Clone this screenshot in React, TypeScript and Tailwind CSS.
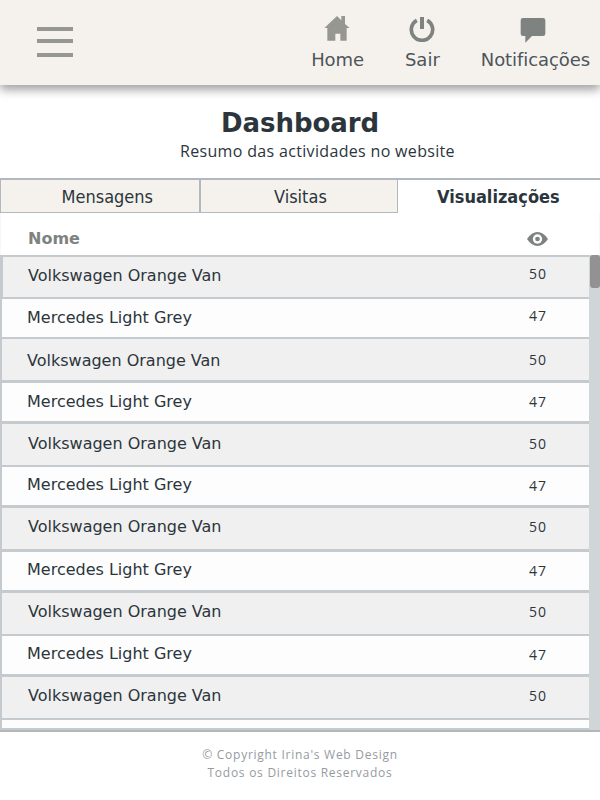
type Row = {
  name: string;
  views: string;
  row: string;
  nameCls: string;
  viewsCls: string;
};

const VAN = "Volkswagen Orange Van";
const MERCEDES = "Mercedes Light Grey";

const rows: Row[] = [
  { name: VAN, views: "50", row: "h-10 mt-[2px] ml-px bg-[#f0f0f0]", nameCls: "pl-[25px] pt-[9px]", viewsCls: "pt-[7px]" },
  { name: MERCEDES, views: "47", row: "h-[38px] mt-[2px] bg-[#fdfdfd]", nameCls: "pl-[25px] pt-[9px]", viewsCls: "pt-[7px]" },
  { name: VAN, views: "50", row: "h-[41px] mt-[2px] bg-[#f0f0f0]", nameCls: "pl-[25px] pt-[12px]", viewsCls: "pt-[11px]" },
  { name: MERCEDES, views: "47", row: "h-[38px] mt-[3px] bg-[#fdfdfd]", nameCls: "pl-[25px] pt-[9px]", viewsCls: "pt-[9px]" },
  { name: VAN, views: "50", row: "h-[41px] mt-[3px] bg-[#f0f0f0]", nameCls: "pl-[26px] pt-[10px]", viewsCls: "pt-[10px]" },
  { name: MERCEDES, views: "47", row: "h-[38px] mt-[2px] bg-[#fdfdfd]", nameCls: "pl-[25px] pt-[8px]", viewsCls: "pt-[9px]" },
  { name: VAN, views: "50", row: "h-[41px] mt-[3px] bg-[#f0f0f0]", nameCls: "pl-[26px] pt-[9px]", viewsCls: "pt-[9px]" },
  { name: MERCEDES, views: "47", row: "h-[38px] mt-[3px] bg-[#fdfdfd]", nameCls: "pl-[25px] pt-[8px]", viewsCls: "pt-[9px]" },
  { name: VAN, views: "50", row: "h-[41px] mt-[3px] bg-[#f0f0f0]", nameCls: "pl-[26px] pt-[9px]", viewsCls: "pt-[9px]" },
  { name: MERCEDES, views: "47", row: "h-[38px] mt-[2px] bg-[#fdfdfd]", nameCls: "pl-[25px] pt-[8px]", viewsCls: "pt-[9px]" },
  { name: VAN, views: "50", row: "h-[41px] mt-[3px] bg-[#f0f0f0]", nameCls: "pl-[26px] pt-[9px]", viewsCls: "pt-[9px]" },
];

function HomeIcon() {
  return (
    <svg className="h-[26px] w-[26px]" viewBox="0 0 78 78" fill="#969791">
      <path d="M39 3 52 16V3h11v24L77 39h-9v38H49V56H34v21H10V39H1Z" />
    </svg>
  );
}

function PowerIcon() {
  return (
    <svg className="h-[26px] w-[26px]" viewBox="0 0 78 78">
      <path d="M23.500 13A32 32 0 1 0 54.500 13" fill="none" stroke="#7e8280" strokeWidth="11" />
      <path d="M33 3h12v36H33z" fill="#7e8280" />
    </svg>
  );
}

function ChatIcon() {
  return (
    <svg className="h-[26px] w-[26px]" viewBox="0 0 78 78" fill="#7e8280">
      <path d="M9 0h60q7 0 7 7v40q0 7-7 7H36L16 74V54H9q-7 0-7-7V7q0-7 7-7Z" />
    </svg>
  );
}

function EyeIcon() {
  return (
    <svg className="h-[14px] w-[21px]" viewBox="0 0 63 42" fill="#7e8280">
      <path d="M0 21Q14 0 31.500 0T63 21Q49 42 31.500 42T0 21Z" />
      <circle cx="31.500" cy="21" r="14" fill="#fff" />
      <circle cx="31.500" cy="21" r="7" />
    </svg>
  );
}

export default function App() {
  return (
    <div className="flex h-[800px] w-[600px] flex-col overflow-hidden bg-white font-['DejaVu_Sans',sans-serif] text-[#2c353c]">
      <header className="flex h-[85px] shrink-0 bg-[#f5f2ed] text-lg leading-6 text-[#4d555b] shadow-[0_5px_9px_rgba(0,0,0,0.36)]">
        <button className="ml-[37px] mt-[27px] flex h-[30px] w-9 flex-col" aria-label="Menu">
          <span className="h-1 w-9 bg-[#969791]" />
          <span className="mt-2 h-1 w-9 bg-[#969791]" />
          <span className="mt-[10px] h-1 w-9 bg-[#969791]" />
        </button>
        <nav className="ml-auto flex pt-[15px]">
          <a className="mr-[41px] flex flex-col items-start">
            <span className="ml-[13px]"><HomeIcon /></span>
            <span className="mt-[7px] tracking-[-0.1px]">Home</span>
          </a>
          <a className="mr-[41px] flex flex-col items-start">
            <span className="ml-[4px] mt-[1px]"><PowerIcon /></span>
            <span className="mt-[6px]">Sair</span>
          </a>
          <a className="mr-[10px] flex flex-col items-start">
            <span className="ml-[39px] mt-[3px]"><ChatIcon /></span>
            <span className="mt-[4px] tracking-[-0.08px]">Notificações</span>
          </a>
        </nav>
      </header>

      <section className="h-[93px] shrink-0">
        <h1 className="ml-[221px] mt-[22px] text-[26px] font-bold leading-8 tracking-[-0.05px]">Dashboard</h1>
        <p className="ml-[180px] font-['Open_Sans',sans-serif] text-base leading-6 tracking-[0.33px]">
          Resumo das actividades no website
        </p>
      </section>

      <div className="flex h-[35px] shrink-0 border-t-2 border-[#b1b8bf] font-['DejaVu_Sans_Condensed','DejaVu_Sans',sans-serif] text-lg leading-[33px]">
        <div className="w-[200px] border-b border-l border-r border-[#b1b8bf] bg-[#f5f2ed] pl-[60.500px]">Mensagens</div>
        <div className="w-[198px] border-b border-l border-r border-[#b1b8bf] bg-[#f5f2ed] pl-[73px]">Visitas</div>
        <div className="flex-1 pl-[39px] font-bold">Visualizações</div>
      </div>

      <div className="flex h-[42px] shrink-0 border-x border-[#f6f7f7] text-base font-bold leading-5 text-[#7e8280]">
        <span className="ml-[27px] mt-[16px]">Nome</span>
        <span className="ml-auto mr-[51px] mt-[19px]"><EyeIcon /></span>
      </div>

      <main className="flex h-[475px] shrink-0 overflow-hidden">
        <div className="w-[589px] bg-[#c5cace] pl-[2px]">
          {rows.map((r, i) => (
            <div key={i} className={`flex justify-between ${r.row}`}>
              <span className={`text-base leading-5 ${r.nameCls}`}>{r.name}</span>
              <span className={`w-[60px] font-['Open_Sans',sans-serif] text-sm leading-5 tracking-[1px] ${r.viewsCls}`}>{r.views}</span>
            </div>
          ))}
          <div className="mt-[2px] h-2 bg-[#fdfdfd]" />
        </div>
        <div className="w-[11px] bg-[#d0d5d8] pl-px">
          <div className="h-[33px] rounded-[3px] bg-[#929292]" />
        </div>
      </main>

      <footer className="flex-1 border-t-2 border-[#b1b8bc] pt-[14px] text-center font-['Open_Sans',sans-serif] text-xs leading-[18px] tracking-[0.73px] text-[#969b9f]">
        <p>© Copyright Irina's Web Design</p>
        <p>Todos os Direitos Reservados</p>
      </footer>
    </div>
  );
}
